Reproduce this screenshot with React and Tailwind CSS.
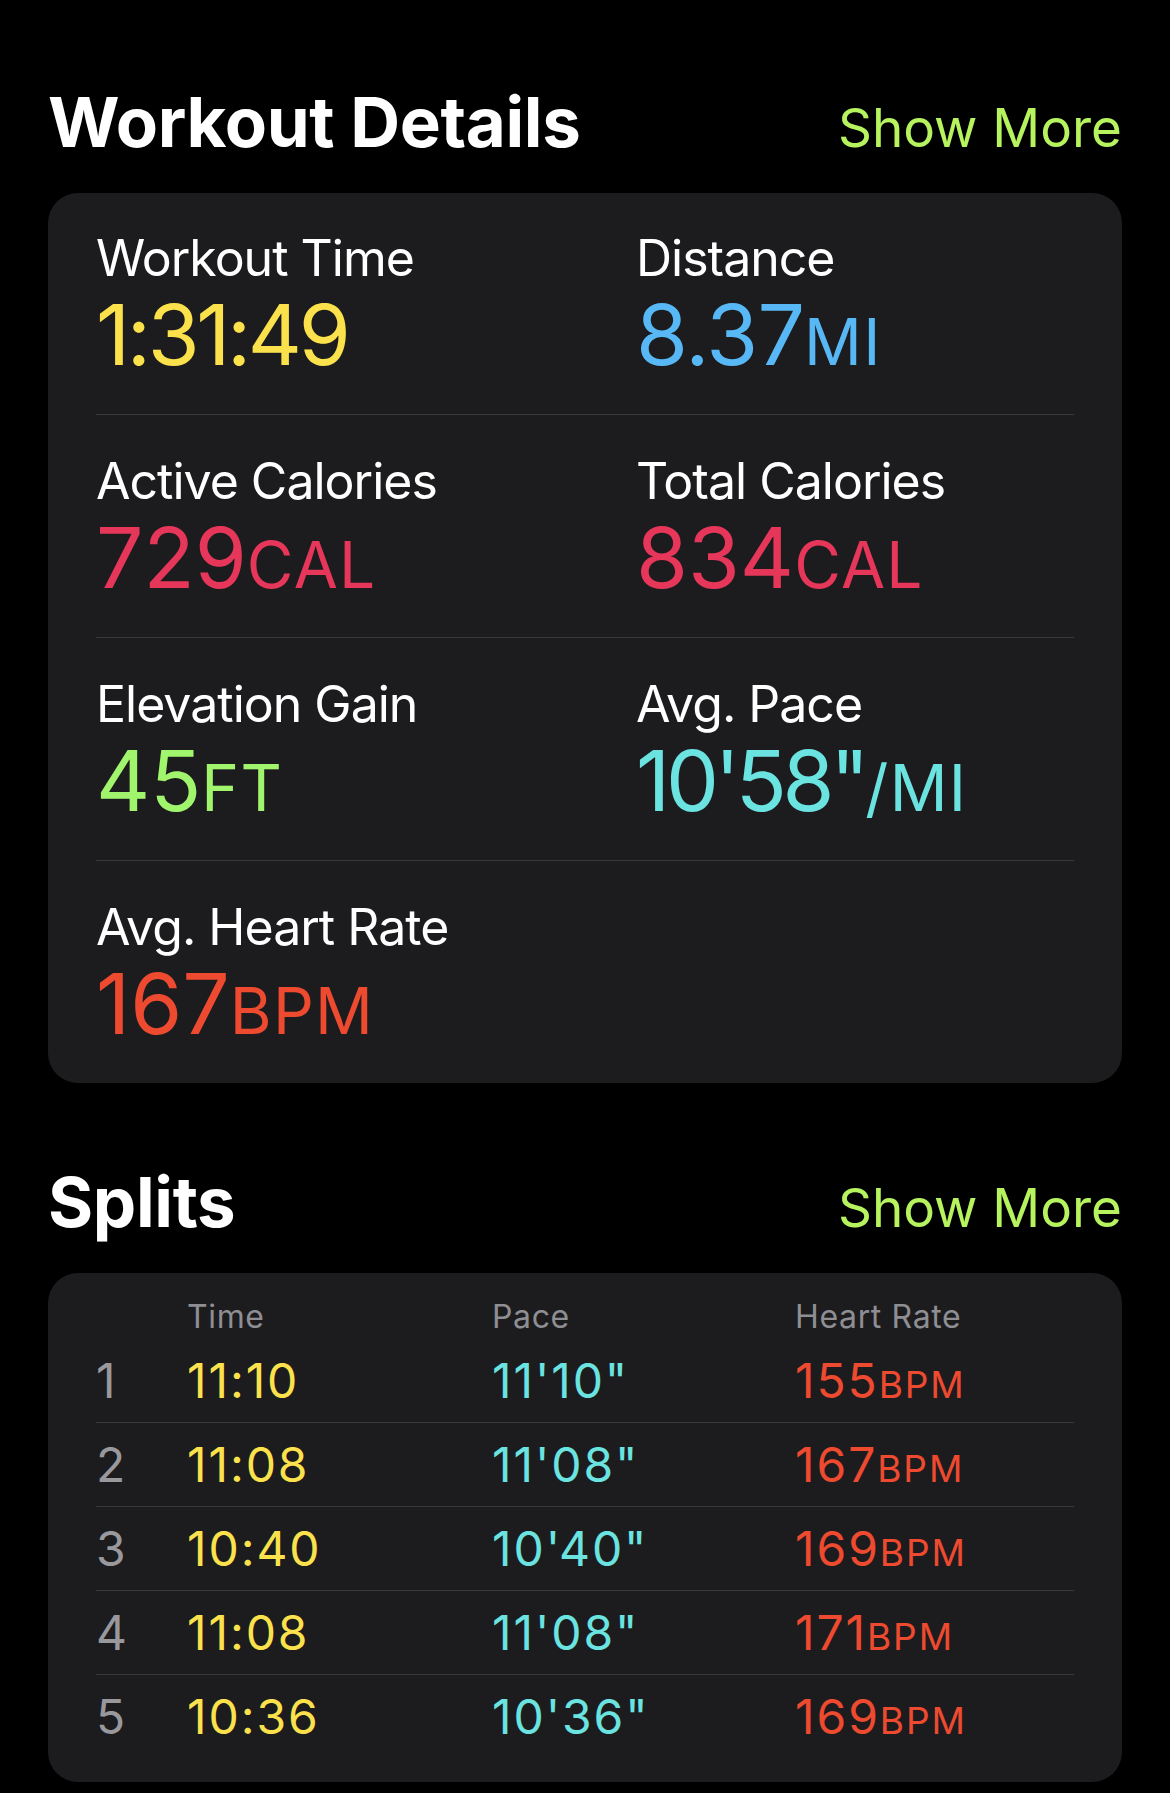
import React from "react";

const metricRows = [
  [
    { label: "Workout Time", value: "1:31:49", unit: "", color: "text-[#fbe24c]", track: "tracking-[-0.04em]" },
    { label: "Distance", value: "8.37", unit: "MI", color: "text-[#58b7f5]", track: "tracking-[-0.01em]" },
  ],
  [
    { label: "Active Calories", value: "729", unit: "CAL", color: "text-[#e6365a]", track: "tracking-normal" },
    { label: "Total Calories", value: "834", unit: "CAL", color: "text-[#e6365a]", track: "tracking-normal" },
  ],
  [
    { label: "Elevation Gain", value: "45", unit: "FT", color: "text-[#a1f56c]", track: "tracking-normal" },
    { label: "Avg. Pace", value: "10'58\"", unit: "/MI", color: "text-[#6be3e0]", track: "tracking-[-0.05em]" },
  ],
  [{ label: "Avg. Heart Rate", value: "167", unit: "BPM", color: "text-[#ee4a30]", track: "tracking-normal" }],
];

const splits = [
  { time: "11:10", pace: "11'10\"", hr: "155" },
  { time: "11:08", pace: "11'08\"", hr: "167" },
  { time: "10:40", pace: "10'40\"", hr: "169" },
  { time: "11:08", pace: "11'08\"", hr: "171" },
  { time: "10:36", pace: "10'36\"", hr: "169" },
];

function Metric({ label, value, unit, color, track }) {
  return (
    <div>
      <div className="text-[50px] leading-[50px] tracking-[-0.02em] text-white whitespace-nowrap">{label}</div>
      <div className={"mt-[10px] text-[84px] leading-[84px] whitespace-nowrap " + color}>
        <span className={track}>{value}</span>
        {unit ? <span className="text-[64px] leading-[64px] tracking-[0.02em]">{unit}</span> : null}
      </div>
    </div>
  );
}

function SectionHeader({ title }) {
  return (
    <div className="flex items-baseline justify-between mb-[36px]">
      <h2 className="text-[69px] leading-[69px] font-bold tracking-[-0.005em] text-white">{title}</h2>
      <span className="text-[53px] leading-[53px] text-[#b6f35e]">Show More</span>
    </div>
  );
}

export default function App() {
  return (
    <div className="min-h-[1793px] bg-black px-[48px] pt-[88px] font-['Inter','Liberation_Sans',sans-serif] antialiased">
      <SectionHeader title="Workout Details" />
      <div className="rounded-[30px] bg-[#1c1c1e] px-[48px]">
        {metricRows.map((row, i) => (
          <div
            key={i}
            className={
              i === 0
                ? "grid grid-cols-[540px_1fr] pt-[40px] pb-[37px]"
                : "grid grid-cols-[540px_1fr] pt-[41px] pb-[37px] border-t border-[#38383a]"
            }
          >
            {row.map((m) => (
              <Metric key={m.label} {...m} />
            ))}
          </div>
        ))}
      </div>

      <div className="mt-[85px]">
        <SectionHeader title="Splits" />
      </div>
      <div className="rounded-[30px] bg-[#1c1c1e] px-[48px] pt-[28px] pb-[24px]">
        <div className="grid grid-cols-[91px_305px_303px_1fr] text-[32px] leading-[32px] tracking-[0.02em] text-[#8e8e93] pb-[6px]">
          <div />
          <div>Time</div>
          <div>Pace</div>
          <div>Heart Rate</div>
        </div>
        {splits.map((s, i) => (
          <div
            key={i}
            className={
              i === 0
                ? "grid grid-cols-[91px_305px_303px_1fr] pt-[18px] pb-[17px] text-[48px] leading-[48px] tracking-[0.04em]"
                : "grid grid-cols-[91px_305px_303px_1fr] pt-[18px] pb-[17px] text-[48px] leading-[48px] tracking-[0.04em] border-t border-[#38383a]"
            }
          >
            <div className="text-[#98989d]">{i + 1}</div>
            <div className="text-[#fbe24c]">{s.time}</div>
            <div className="text-[#6be3e0]">{s.pace}</div>
            <div className="text-[#ee4a30]">
              {s.hr}
              <span className="text-[37px] leading-[37px]">BPM</span>
            </div>
          </div>
        ))}
      </div>
    </div>
  );
}
